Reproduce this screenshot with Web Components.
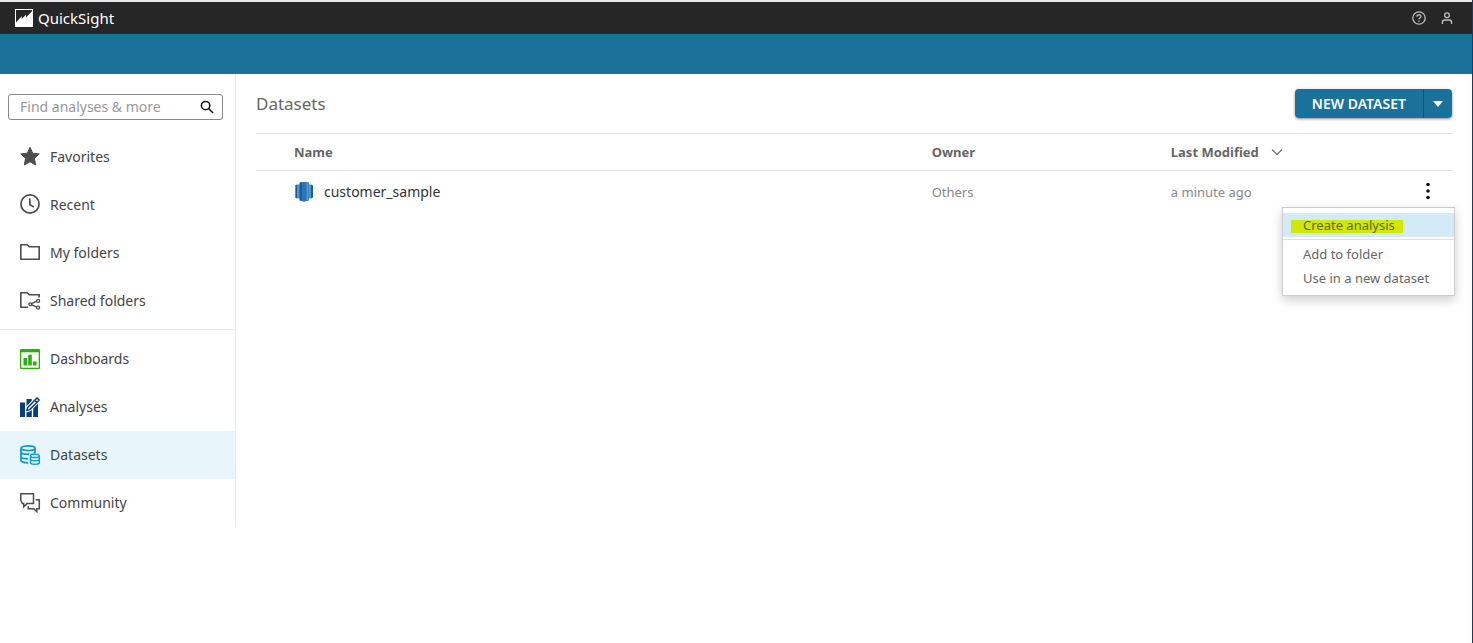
<!DOCTYPE html>
<html lang="en">
<head>
<meta charset="utf-8">
<meta name="viewport" content="width=device-width, initial-scale=1">
<title>QuickSight</title>
<style>
    :root {
        --brand: #1a7199;
        --line: #e0e0e0;
        --text: #444;
        --muted: #666;
    }
    body { margin: 0; background: #fff; color: var(--text); font: 14px/24px "Noto Sans", "Open Sans", sans-serif; }
</style>
</head>
<body>
<qs-app>
    <qs-header slot="header">QuickSight</qs-header>
    <qs-sidebar slot="sidebar">
        <qs-nav-item icon="star">Favorites</qs-nav-item>
        <qs-nav-item icon="clock">Recent</qs-nav-item>
        <qs-nav-item icon="folder">My folders</qs-nav-item>
        <qs-nav-item icon="shared">Shared folders</qs-nav-item>
        <qs-nav-item slot="content" icon="dashboard">Dashboards</qs-nav-item>
        <qs-nav-item slot="content" icon="analysis">Analyses</qs-nav-item>
        <qs-nav-item slot="content" icon="dataset" active>Datasets</qs-nav-item>
        <qs-nav-item slot="content" icon="community">Community</qs-nav-item>
    </qs-sidebar>
    <qs-toolbar>
        Datasets
        <qs-split-button slot="actions">NEW DATASET</qs-split-button>
    </qs-toolbar>
    <qs-dataset-table>
        <qs-menu slot="menu">
            <qs-menu-item active marked>Create analysis</qs-menu-item>
            <qs-menu-item slot="more">Add to folder</qs-menu-item>
            <qs-menu-item slot="more">Use in a new dataset</qs-menu-item>
        </qs-menu>
    </qs-dataset-table>
</qs-app>

<script>
// --- Icons ---
const ICONS = {
    star: `<path fill="#4d4d4d" stroke="#4d4d4d" stroke-linejoin="round" d="M10 .3l2.7 5.9 6.5.7-4.8 4.5 1.3 6.6-5.7-3.3L4.3 18l1.3-6.6L.8 6.9l6.5-.7z"/>`,
    clock: `<g fill="none" stroke="#4d4d4d" stroke-width="1.7"><circle cx="10" cy="9" r="9.1"/><path d="M9.8 3.5v6l4 2.6"/></g>`,
    folder: `<path fill="none" stroke="#4d4d4d" stroke-width="1.6" d="M.8 16.2V1.8h6.5l2 2h9.9v12.4z"/>`,
    shared: `<g fill="none" stroke="#4d4d4d" stroke-width="1.6"><path d="M8 16.2H.8V1.8h6.5l2 2h9.9v2.7"/><g stroke-width="1.3"><path d="M11.5 12.7l5.3-2.5M11.5 13.7l5.3 2.5"/><circle cx="10.3" cy="13.2" r="1.4"/><circle cx="18.1" cy="9.9" r="1.5"/><circle cx="18.1" cy="16.7" r="1.5"/></g></g>`,
    dashboard: `<rect width="20" height="20" rx="1" fill="#2eae0c"/><path fill="#fff" d="M1.3 3.3h17.4v15.4H1.3z"/><path fill="#2eae0c" d="M3.5 9h3.6v7.5H3.5zM8.2 5.8h3.6v10.7H8.2zM13 12.5h3.6v4H13z"/>`,
    analysis: `<path fill="#063f78" d="M0 5.5h5V20H0zM6.5 2h5.3v18H6.5zM13.2 7h4.8v13h-4.8z"/><path fill="#fff" stroke="#fff" stroke-width="3.4" stroke-linejoin="round" d="M6.8 13.6l.9-3.2L16.9.9l2.3 2.1-9.5 9.6z"/><path fill="#fff" stroke="#063f78" stroke-width="1.5" stroke-linejoin="round" d="M6.8 13.6l.9-3.2L16.9.9l2.3 2.1-9.5 9.6zM14.7 3.2l2.3 2"/>`,
    dataset: `<g fill="none" stroke="#0c9ed0" stroke-width="1.8"><ellipse cx="8" cy="3.2" rx="7" ry="2.4"/><path d="M1 3.2v12.4c0 1.2 3.1 2.2 7.2 2.2M15 3.2v5M1 7.2c.4 1.4 3.2 2.1 7 2 3.9 0 6.8-.7 7-2M1 12c.5 1.2 3.2 1.7 7.2 1.8"/></g><path fill="#e8f5fb" d="M9 8.4h11.8V20H9z"/><g fill="none" stroke="#0c9ed0" stroke-width="1.5"><ellipse cx="14.9" cy="10.9" rx="4.4" ry="1.7"/><path d="M10.5 10.9v6.8c0 2 8.8 2 8.8 0v-6.8M10.5 14.3c0 1.9 8.8 1.9 8.8 0"/></g>`,
    community: `<g fill="none" stroke="#4d4d4d" stroke-width="1.5"><path d="M.8.8h12.7v9.8H7l-3.3 3.2v-3.2H2.3L.8 7.2z"/><path d="M15.7 6.8h3.6v9h-2.5v3l-3-3H8.2v-2.6"/></g>`
};

function define(name, html, setup) {
    const template = document.createElement('template');
    template.innerHTML = html;
    customElements.define(name, class extends HTMLElement {
        constructor() {
            super();
            this.attachShadow({ mode: 'open' }).append(template.content.cloneNode(true));
        }

        connectedCallback() { if (setup) setup(this, this.shadowRoot); }
    });
}

// --- Page shell ---
define('qs-app', `
    <style>
        :host { display: flex; flex-direction: column; min-height: 100vh; box-sizing: border-box; border-right: 1px solid #173a68; }
        .band { height: 40px; background: var(--brand); }
        .body { display: flex; align-items: flex-start; }
        main { flex: 1; min-width: 0; padding: 0 20px; }
    </style>
    <slot name="header"></slot>
    <div class="band"></div>
    <div class="body">
        <slot name="sidebar"></slot>
        <main><slot></slot></main>
    </div>
`);

define('qs-header', `
    <style>
        :host { display: block; border-top: 2px solid #e9e9ec; background: #262626; color: #fff; }
        header { display: flex; align-items: center; height: 32px; padding: 0 17px 0 15px; font-size: 15px; }
        .logo { display: flex; align-items: center; gap: 5px; flex: 1; color: inherit; text-decoration: none; }
        .tools { display: flex; gap: 12px; }
        button { display: flex; padding: 0; border: 0; background: none; color: #bdbdbd; cursor: pointer; }
        svg { display: block; }
    </style>
    <header>
        <a class="logo" href="#">
            <svg width="18" height="18" viewBox="0 0 18 18"><path fill="#fff" d="M0 0h18v18H0z"/><path fill="#262626" d="M1 1h16v1.2L11 8.5V5.7l-4.3 4.2V7.3L1 13.5z"/></svg>
            <slot></slot>
        </a>
        <div class="tools">
            <button aria-label="Help">
                <svg width="16" height="16" viewBox="0 0 16 16" fill="none" stroke="currentColor" stroke-width="1.3"><circle cx="8" cy="8" r="6.2"/><path d="M6 6.7c0-2.6 4-2.5 4-.2 0 1.2-2 1.4-2 2.7M8 10.4v1.3"/></svg>
            </button>
            <button aria-label="Account">
                <svg width="16" height="16" viewBox="0 0 16 16" fill="none" stroke="currentColor" stroke-width="1.3"><circle cx="8" cy="5.2" r="2.4"/><path d="M3.4 14v-1.6c0-1.5 1-2.4 2.5-2.4h4.2c1.5 0 2.5.9 2.5 2.4V14"/></svg>
            </button>
        </div>
    </header>
`);

// --- Sidebar ---
define('qs-sidebar', `
    <style>
        :host { display: block; width: 235px; flex: none; border-right: 1px solid #eaeaea; padding-top: 20px; }
        .search { display: flex; align-items: center; height: 26px; box-sizing: border-box; margin: 0 12px 13px 8px; padding: 0 8px 0 11px; border: 1px solid #888; border-radius: 3px; }
        input { flex: 1; min-width: 0; padding: 0; border: 0; outline: 0; background: none; font: inherit; color: inherit; line-height: 20px; }
        input::placeholder { color: #999; opacity: 1; }
        button { display: flex; padding: 0; border: 0; background: none; color: #111; }
        hr { margin: 4px 0 5px; border: 0; border-top: 1px solid #eaeaea; }
    </style>
    <form class="search" role="search">
        <input type="text" placeholder="Find analyses &amp; more" aria-label="Find analyses and more">
        <button type="button" aria-label="Search">
            <svg width="14" height="14" viewBox="0 0 14 14" fill="none" stroke="currentColor" stroke-width="1.5"><circle cx="5.6" cy="5.6" r="4.2"/><path d="M8.7 8.7l4.4 4.3"/></svg>
        </button>
    </form>
    <nav>
        <slot></slot>
        <hr>
        <slot name="content"></slot>
    </nav>
`);

define('qs-nav-item', `
    <style>
        :host { display: block; }
        :host([active]) { background: #e8f5fb; }
        a { display: flex; align-items: center; gap: 10px; height: 48px; padding: 0 20px; color: inherit; text-decoration: none; }
        svg { flex: none; overflow: visible; }
    </style>
    <a href="#"><svg width="20" height="20" viewBox="0 0 20 20"></svg><slot></slot></a>
`, (el, root) => {
    root.querySelector('svg').innerHTML = ICONS[el.getAttribute('icon')];
});

// --- Toolbar ---
define('qs-toolbar', `
    <style>
        :host { display: flex; align-items: center; justify-content: space-between; padding: 15px 0; }
        h1 { margin: 0; font-size: 17px; font-weight: 400; color: var(--muted); }
    </style>
    <h1><slot></slot></h1>
    <slot name="actions"></slot>
`);

define('qs-split-button', `
    <style>
        :host { display: flex; height: 29px; border-radius: 4px; box-shadow: 0 1px 3px rgba(0, 0, 0, .45); }
        button { display: flex; align-items: center; justify-content: center; border: 0; background: var(--brand); color: #fff; font: inherit; font-weight: 600; cursor: pointer; }
        .main { padding: 0 17px; border-radius: 4px 0 0 4px; }
        .more { width: 29px; padding: 0; border-left: 1px solid #115575; border-radius: 0 4px 4px 0; }
    </style>
    <button class="main"><slot></slot></button>
    <button class="more" aria-label="More options"><svg width="10" height="6" viewBox="0 0 10 6"><path fill="#fff" d="M0 0h10L5 6z"/></svg></button>
`);

// --- Dataset table ---
define('qs-dataset-table', `
    <style>
        :host { display: block; }
        table { width: 100%; table-layout: fixed; border-collapse: separate; border-spacing: 0; }
        th, td { padding: 0; text-align: left; }
        th { height: 36px; border-top: 1px solid var(--line); border-bottom: 1px solid var(--line); color: var(--muted); font-size: 13px; font-weight: 700; }
        td { height: 41px; color: #888; font-size: 13px; }
        th:first-child, td:first-child { padding-left: 38px; }
        .mid { width: 20%; }
        .last { width: 42px; position: relative; }
        .sort { display: flex; align-items: center; gap: 12px; padding: 0; border: 0; background: none; color: inherit; font: inherit; }
        .name { display: flex; align-items: center; gap: 10px; color: #333; font-size: 14px; text-decoration: none; }
        .kebab { display: flex; align-items: center; justify-content: center; width: 36px; height: 32px; padding: 0; border: 0; background: none; }
        .popup { position: absolute; top: 36px; right: -3px; z-index: 1; }
    </style>
    <table>
        <thead>
            <tr>
                <th>Name</th>
                <th class="mid">Owner</th>
                <th class="mid"><button class="sort">Last Modified <svg width="12" height="8" viewBox="0 0 12 8"><path fill="none" stroke="#666" stroke-width="1.1" d="M1 1.5l5 5 5-5"/></svg></button></th>
                <th class="last"></th>
            </tr>
        </thead>
        <tbody>
            <tr>
                <td>
                    <a class="name" href="#">
                        <svg width="20" height="20" viewBox="0 0 20 20"><path fill="#205b99" d="M1 3.5l2-1v14l-2-1zM17 2.5l2 1v12l-2 1z"/><path fill="#5294cf" d="M3 2.5h3v14H3zM14 2.5h3v14h-3zM1 3.5l1-.5v13l-1-.5z"/><path fill="#205b99" d="M5.5.5L10-.5l4.5 1v18l-4.5 1-4.5-1z"/><path fill="#2e73b8" d="M8 0l2-.5 4.5 1v18l-4.5 1-2-.5z"/><path fill="#5294cf" d="M12.5.1l2 .5v17.8l-2 .5z"/></svg>
                        customer_sample
                    </a>
                </td>
                <td>Others</td>
                <td>a minute ago</td>
                <td class="last">
                    <button class="kebab" aria-label="Dataset actions"><svg width="4" height="20" viewBox="0 0 4 20" fill="#111"><circle cx="2" cy="2.5" r="1.8"/><circle cx="2" cy="9" r="1.8"/><circle cx="2" cy="15.5" r="1.8"/></svg></button>
                    <div class="popup"><slot name="menu"></slot></div>
                </td>
            </tr>
        </tbody>
    </table>
`);

define('qs-menu', `
    <style>
        :host { display: block; min-width: 171px; padding: 5px 0; border: 1px solid #ccc; background: #fff; box-shadow: 0 4px 10px rgba(0, 0, 0, .2); }
        hr { margin: 2px 0; border: 0; border-top: 1px solid var(--line); }
    </style>
    <slot></slot>
    <hr>
    <slot name="more"></slot>
`);

define('qs-menu-item', `
    <style>
        :host { display: block; }
        :host([active]) { background: #d3eaf7; }
        button { display: flex; align-items: center; width: 100%; height: 24px; padding: 0 20px; border: 0; background: none; color: var(--muted); font: inherit; font-size: 13px; white-space: nowrap; cursor: pointer; }
        :host([marked]) span { margin-left: -12px; padding: 0 8px 0 12px; background: linear-gradient(#d3e800, #d3e800) 0 7px / 100% 13px no-repeat; color: #5c6612; }
    </style>
    <button><span><slot></slot></span></button>
`);
</script>
</body>
</html>
